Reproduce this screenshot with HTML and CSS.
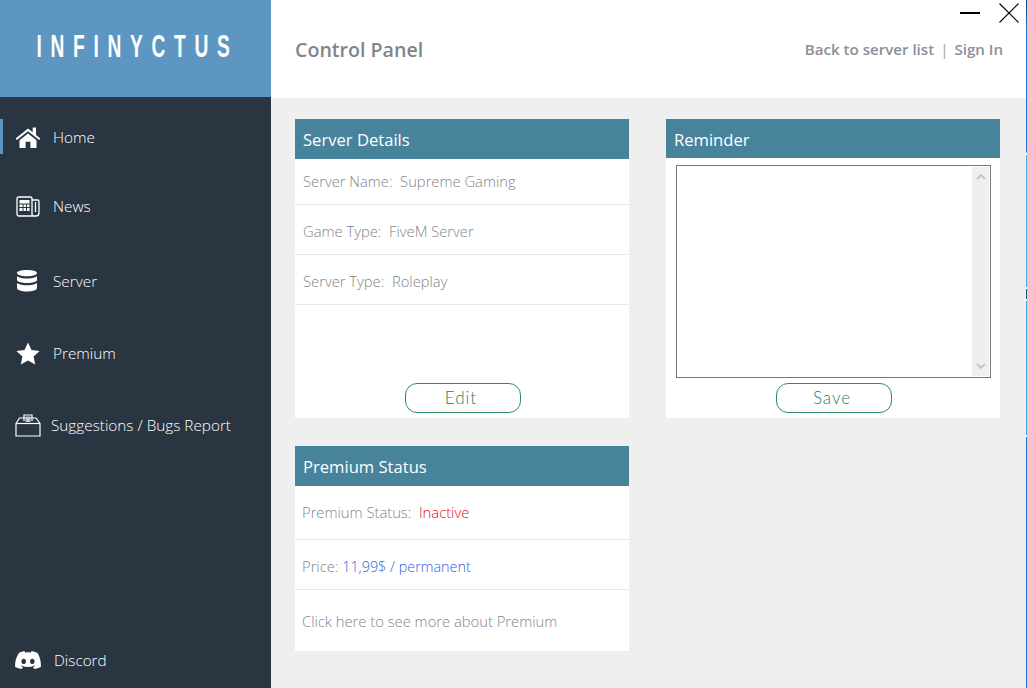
FILE: index.html
```html
<!DOCTYPE html>
<html lang="en">
<head>
  <meta charset="UTF-8" />
  <title>Infinyctus - Control Panel</title>
  <link rel="stylesheet" href="styles.css">
</head>
<body>
<div class="app">

  <!-- Sidebar -->
  <aside class="sidebar">
    <div class="brand"><span class="brand-text">INFINYCTUS</span></div>
    <nav class="nav">
      <a class="nav-item nav-home active">
        <svg class="nav-icon" viewBox="0 0 26 22" width="26" height="22"><path fill="#fff" d="M13 2.600 .6 12.600l1.200 1.500L13 5.200l11.200 8.900 1.200-1.500-4.400-3.600V1.400h-3.300v4.800zM4.500 14.300V22h6.100v-6.200h4.800V22h6.100v-7.700L13 7.400z"/></svg>
        <span>Home</span>
      </a>
      <a class="nav-item nav-news">
        <svg class="nav-icon" viewBox="0 0 24 21" width="24" height="21"><g fill="none" stroke="#fff" stroke-width="1.300"><path d="M1 2.500Q1 1 2.500 1h12Q16 1 16 2.500V18q0 2 2 2H3q-2 0-2-2z"/><path d="M16 4h5.500Q23 4 23 5.500V17q0 3-3 3h-2"/><path d="M19.500 6v10"/></g><path fill="#fff" d="M3.500 4h10v3.500h-10zM3.500 8.500h3v2.500h-3zM7.500 8.500h2.500v2.500h-2.500zM11 8.500h2.500v2.500h-2.500zM3.500 12h3v3h-3zM7.500 12h2.500v3h-2.500zM11 12h2.500v3h-2.500z"/></svg>
        <span>News</span>
      </a>
      <a class="nav-item nav-server">
        <svg class="nav-icon" viewBox="0 0 20 22" width="20" height="22"><path fill="#fff" d="M0 3c0-2 4.500-3 10-3s10 1 10 3-4.500 3.200-10 3.200S0 5 0 3zM0 6.200c2 1.600 6 2.300 10 2.300s8-.7 10-2.300V10c0 1.600-4.500 3-10 3S0 11.600 0 10zM0 13c2 1.600 6 2.300 10 2.300s8-.7 10-2.300v5c0 2-4.500 3.500-10 3.500S0 20 0 18z"/></svg>
        <span>Server</span>
      </a>
      <a class="nav-item nav-premium">
        <svg class="nav-icon" viewBox="0 0 24 23" width="24" height="23"><path fill="#fff" d="M12 .5l3.500 7.400 8.100 1-6 5.600 1.600 8-7.200-4-7.200 4 1.600-8-6-5.600 8.100-1z"/></svg>
        <span>Premium</span>
      </a>
      <a class="nav-item nav-report">
        <svg class="nav-icon" viewBox="0 0 26 23" width="26" height="23"><g fill="none" stroke="#fff" stroke-width="1.200"><path d="M1 9.500 4.500 4H21l4 5.500V22H1z"/><path d="M1 9.500h24"/><path d="M9 7V1h8v6"/></g><path fill="#c9ccd0" d="M10.500 2.500h5V8h-5z"/></svg>
        <span>Suggestions / Bugs Report</span>
      </a>
    </nav>
    <a class="nav-item nav-discord">
      <svg class="nav-icon" viewBox="0 0 26 18" width="26" height="18"><path fill="#fff" d="M21.900 1.700A21 21 0 0 0 16.600 0l-.7 1.400a19 19 0 0 0-5.800 0L9.400 0a21 21 0 0 0-5.300 1.700C.7 6.600-.2 11.400.2 16.100A21 21 0 0 0 6.700 18l1.300-2.100-2.100-1 .5-.4a15 15 0 0 0 13.200 0l.5.400-2.100 1 1.300 2.100a21 21 0 0 0 6.500-1.900c.5-5.500-.9-10.300-3.400-14.400zM8.700 13c-1.300 0-2.300-1.200-2.300-2.600S7.400 7.800 8.700 7.800 11 9 11 10.400 10 13 8.700 13zm8.600 0c-1.300 0-2.300-1.200-2.300-2.600s1-2.600 2.300-2.600 2.300 1.200 2.300 2.600-1 2.600-2.300 2.600z"/></svg>
      <span>Discord</span>
    </a>
  </aside>

  <div class="main">
    <!-- Header -->
    <header class="topbar">
      <h1>Control Panel</h1>
      <div class="links"><a>Back to server list</a><span class="sep">|</span><a>Sign In</a></div>
      <div class="window-btns">
        <span class="minimize"></span>
        <svg viewBox="0 0 20 20" width="20" height="20"><path d="M.5.500l19 19M19.500.500l-19 19" stroke="#000" stroke-width="1.100" fill="none"/></svg>
      </div>
    </header>

    <!-- Cards -->
    <div class="content">
      <div class="col col-left">
        <section class="card card-server">
          <h2>Server Details</h2>
          <div class="row row-name">Server Name:&nbsp; Supreme Gaming</div>
          <div class="row">Game Type:&nbsp; FiveM Server</div>
          <div class="row">Server Type:&nbsp; Roleplay</div>
          <div class="card-foot"><button class="btn">Edit</button></div>
        </section>
        <section class="card card-premium">
          <h2>Premium Status</h2>
          <div class="row row-status">Premium Status:&nbsp; <span class="inactive">Inactive</span></div>
          <div class="row row-price">Price: <span class="price">11,99$ / permanent</span></div>
          <div class="row row-more">Click here to see more about Premium</div>
        </section>
      </div>
      <div class="col col-right">
        <section class="card card-reminder">
          <h2>Reminder</h2>
          <div class="note">
            <div class="scrollbar">
              <svg viewBox="0 0 10 6" width="10" height="6"><path d="M1 5l4-4 4 4" fill="none" stroke="#c4c4c4" stroke-width="1.800"/></svg>
              <svg viewBox="0 0 10 6" width="10" height="6"><path d="M1 1l4 4 4-4" fill="none" stroke="#c4c4c4" stroke-width="1.800"/></svg>
            </div>
          </div>
          <div class="card-foot"><button class="btn">Save</button></div>
        </section>
      </div>
    </div>
  </div>

  <div class="edge"></div>
</div>
</body>
</html>
```

FILE: styles.css
```css
* {
  box-sizing: border-box;
}
html, body {
  margin: 0;
  height: 100%;
  overflow: hidden;
}
body {
  font-family: "Open Sans", sans-serif;
  font-weight: 300;
  background: #efefef;
}
.app {
  display: flex;
  width: 1027px;
  height: 688px;
}

/* Sidebar */
.sidebar {
  width: 271px;
  background: #2a3542;
  display: flex;
  flex-direction: column;
}
.brand {
  height: 97px;
  background: #5d97c1;
  display: flex;
  justify-content: center;
  align-items: center;
  padding-bottom: 4px;
  overflow: hidden;
}
/* condensed logo lettering, no narrow font available */
.brand-text {
  flex: none;
  color: #fff;
  font-family: "Liberation Sans", sans-serif;
  font-weight: 700;
  font-size: 32px;
  letter-spacing: 14.5px;
  margin-right: -3px;
  transform: scaleX(.6);
}
.nav {
  flex: 1;
  display: flex;
  flex-direction: column;
}
.nav-item {
  display: flex;
  align-items: center;
  color: #fff;
  font-size: 15.3px;
  position: relative;
}
.nav-icon {
  flex: none;
}
.nav-home {
  margin-top: 22px;
  height: 35px;
  padding-left: 15px;
  gap: 12px;
}
.nav-home.active::before {
  content: "";
  position: absolute;
  left: 0;
  top: 0;
  width: 3px;
  height: 35px;
  background: #5d97c1;
}
.nav-news {
  margin-top: 37px;
  height: 30px;
  padding-left: 16px;
  gap: 13px;
}
.nav-server {
  margin-top: 45px;
  height: 30px;
  padding-left: 17px;
  gap: 16px;
}
.nav-premium {
  margin-top: 42px;
  height: 30px;
  padding-left: 16px;
  gap: 13px;
}
.nav-report {
  margin-top: 42px;
  height: 30px;
  padding-left: 15px;
  gap: 10px;
}
.nav-discord {
  height: 30px;
  margin-bottom: 13px;
  padding-left: 15px;
  gap: 13px;
}

/* Header */
.main {
  flex: 1;
  display: flex;
  flex-direction: column;
}
.topbar {
  height: 98px;
  background: #fff;
  display: flex;
  align-items: center;
  justify-content: space-between;
  padding: 0 24px;
  position: relative;
}
.topbar h1 {
  margin: 0;
  color: #80848d;
  font-size: 19.6px;
  font-weight: 600;
}
.links {
  color: #8b8f9b;
  font-size: 15.1px;
  font-weight: 600;
}
.sep {
  color: #b0a08c;
  margin: 0 6px;
  font-weight: 400;
}
.window-btns {
  position: absolute;
  top: 3px;
  right: 8px;
  display: flex;
  align-items: center;
  gap: 19px;
}
.minimize {
  width: 20px;
  height: 2px;
  background: #000;
}

/* Cards */
.content {
  flex: 1;
  display: flex;
  gap: 37px;
  padding: 21px 0 0 24px;
}
.col {
  display: flex;
  flex-direction: column;
}
.col-left {
  width: 334px;
  gap: 28px;
}
.col-right {
  width: 334px;
}
.card {
  background: #fff;
  display: flex;
  flex-direction: column;
}
.card h2 {
  margin: 0;
  height: 40px;
  background: #47849b;
  color: #fff;
  font-size: 16.6px;
  font-weight: 400;
  line-height: 41px;
  padding-left: 8px;
}
.card-server {
  height: 299px;
}
.card-reminder {
  height: 299px;
}
.card-reminder h2 {
  height: 39px;
}
.card-premium {
  height: 205px;
}
.row {
  height: 50px;
  border-bottom: 1px solid #e8e8e8;
  color: #82858d;
  font-size: 14.75px;
  line-height: 53px;
  padding-left: 8px;
}
.row-name {
  height: 46px;
  line-height: 45px;
}
.card-premium .row {
  padding-left: 7px;
}
.row-status {
  height: 54px;
  line-height: 53px;
}
.row-price {
  line-height: 53px;
}
.row-more {
  border-bottom: 0;
  height: 61px;
  line-height: 63px;
}
.inactive {
  color: #e0102a;
}
.price {
  color: #2f62e0;
  font-size: 14.4px;
}
.card-foot {
  margin-top: auto;
  height: 35px;
  display: flex;
  justify-content: center;
}
.btn {
  width: 116px;
  height: 30px;
  margin-left: 2px;
  border: 1px solid #2e8b63;
  border-radius: 12px;
  background: #fff;
  color: #1f7f55;
  font-family: "Lato", sans-serif;
  font-weight: 300;
  font-size: 17px;
  letter-spacing: 1px;
  padding: 0 4px 2px 0;
}
.note {
  margin: 7px 9px 0 10px;
  height: 213px;
  border: 1px solid #777;
  display: flex;
  justify-content: flex-end;
}
.scrollbar {
  width: 17px;
  margin: 1px;
  background: #efefef;
  display: flex;
  flex-direction: column;
  justify-content: space-between;
  align-items: center;
  padding: 7px 0;
}

.edge {
  position: absolute;
  top: 0;
  right: 0;
  width: 1px;
  height: 688px;
  background: linear-gradient(#1b3f78 0, #1f78d0 33px, #1f78d0 152px, #fff 153px, #fff 155px, #4aa8e0 155px, #4aa8e0 287px, #fff 287px, #fff 289px, #1d4f8c 289px, #1d4f8c 299px, #fff 299px, #fff 301px, #3ba8e4 301px, #3ba8e4 435px, #fff 435px, #fff 437px, #1f72cc 437px);
}
```
